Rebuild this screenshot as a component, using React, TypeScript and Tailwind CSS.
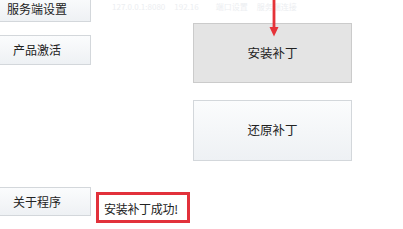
import React from "react";

const font = { fontFamily: '"Noto Sans CJK SC", "Microsoft YaHei", sans-serif' };

function SideButton({ label, className }: { label: string; className: string }) {
  return (
    <div
      className={`flex w-[108px] items-center justify-center border border-[#d3d7db] bg-gradient-to-b from-[#fbfcfd] to-[#eef1f4] text-[12px] text-[#222] ${className}`}
    >
      {label}
    </div>
  );
}

export default function App() {
  return (
    <div
      className="relative flex h-[229px] w-[403px] overflow-hidden bg-white"
      style={font}
    >
      <div className="-ml-[17px] flex w-[207px] shrink-0 flex-col">
        <SideButton label="服务端设置" className="-mt-[5px] h-[27px] pt-[1px]" />
        <SideButton label="产品激活" className="mt-[13px] h-[30px]" />
        <div className="mt-[122px] flex items-start">
          <SideButton label="关于程序" className="h-[29px]" />
          <div className="ml-[5px] mt-[5px] flex h-[31px] w-[94px] items-center border-[3px] border-[#e2313b] bg-white pl-[5px] pt-[2px] text-[12px] tracking-[-0.3px] text-[#222]">
            安装补丁成功!
          </div>
        </div>
      </div>
      <div className="ml-[3px] flex w-[159px] shrink-0 flex-col gap-[17px] pt-[23px]">
        <div className="flex h-[60px] items-center justify-center border border-[#cbcbcb] bg-[#e4e4e4] pt-[1px] text-[12.5px] text-[#222]">
          安装补丁
        </div>
        <div className="flex h-[61px] items-center justify-center border border-[#d3d7db] bg-gradient-to-b from-[#fbfcfd] to-[#eef1f4] text-[12.5px] text-[#222]">
          还原补丁
        </div>
      </div>

      <div className="pointer-events-none absolute left-[112px] top-[1px] flex gap-[9px] text-[8px] text-[#eceef1]">
        <span>127.0.0.1:8080</span>
        <span>192.16</span>
        <span className="ml-[8px]">端口设置</span>
        <span>服务端连接</span>
      </div>

      <svg
        className="pointer-events-none absolute left-[268px] top-0"
        width="12"
        height="38"
        viewBox="0 0 12 38"
      >
        <rect x="4.6" y="0" width="2.8" height="29" fill="#e53238" />
        <polygon points="1.5,27 10.5,27 6,36.5" fill="#e53238" />
      </svg>
    </div>
  );
}
